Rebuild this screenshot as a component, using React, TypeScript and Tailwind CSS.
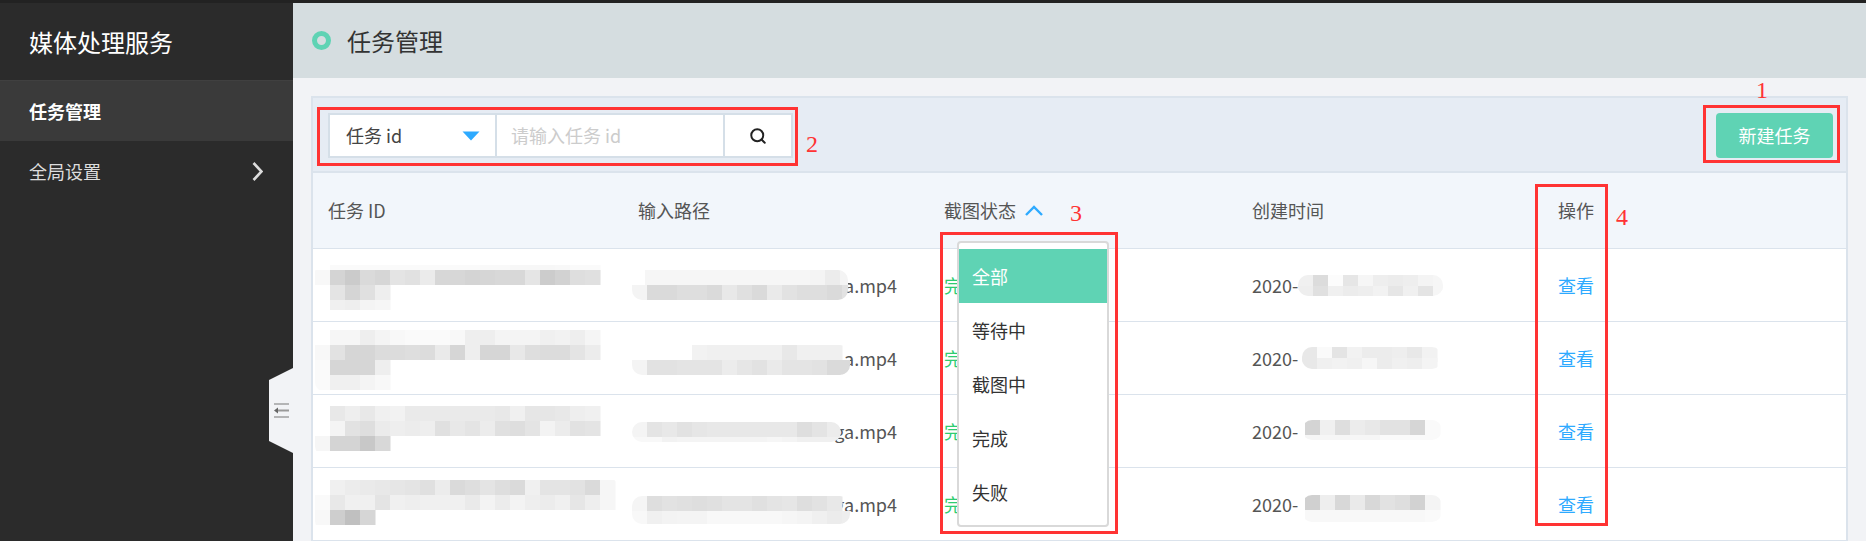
import { Search } from 'lucide-react'

const FONT = 'font-["Microsoft_YaHei","Noto_Sans_CJK_SC","Noto_Sans",sans-serif]'

interface MosaicLine { x?: number; y: number; h?: number; cells: number[] }

// smudged-out cells: each number is the grey level of a 15px square
function Mosaic({ left, top, width, height, lines }: { left: number; top: number; width: number; height: number; lines: MosaicLine[] }) {
  return (
    <svg className="absolute rounded-[10px]" style={{ left, top }} width={width} height={height}>
      {lines.map((l, i) => l.cells.map((c, j) => (
        <rect
          key={`${i}-${j}`}
          x={(l.x ?? 0) + j * 15}
          y={l.y}
          width={15.5}
          height={l.h ?? 15}
          fill={`rgb(${c},${c},${c})`}
        />
      )))}
    </svg>
  )
}

const rows = [
  { path: 'ga.mp4', date: '2020-' },
  { path: 'a.mp4', date: '2020-' },
  { path: 'ga.mp4', date: '2020-' },
  { path: 'gga.mp4', date: '2020-' },
]

const smudges = [
  // task id column
  { left: 315, top: 262, width: 290, height: 52, lines: [
    { x: 0, y: 8, h: 15, cells: [248] },
    { x: 15, y: 3, cells: [250,250,250,250,250,250,250,250,250,250,249,249,247,247,247,248,250,250] },
    { x: 15, y: 8, cells: [212,203,218,214,228,225,235,215,215,212,214,216,216,229,204,210,222,224] },
    { x: 15, y: 23, cells: [228,213,224,238] },
    { x: 15, y: 38, h: 10, cells: [240,238,244,246] },
  ] },
  { left: 315, top: 330, width: 305, height: 62, lines: [
    { x: 15, y: 0, cells: [246,246,238,244,248,250,250,250,248,238,238,244,244,244,240,242,238,245] },
    { x: 0, y: 15, cells: [248,226,214,214,220,220,222,220,234,214,238,214,214,232,222,220,220,228,236] },
    { x: 0, y: 30, cells: [250,214,214,214,238] },
    { x: 0, y: 45, cells: [250,240,240,244,248] },
  ] },
  { left: 315, top: 404, width: 290, height: 52, lines: [
    { x: 15, y: 2, cells: [232,238,232,240,242,234,234,234,234,234,234,232,240,230,230,232,238,240] },
    { x: 15, y: 17, cells: [244,226,222,235,238,236,238,224,232,228,236,224,222,228,243,236,226,228] },
    { x: 0, y: 32, cells: [246,212,212,200,216] },
  ] },
  { left: 315, top: 479, width: 305, height: 52, lines: [
    { x: 15, y: 1, cells: [240,236,234,232,230,228,224,236,218,222,228,222,218,240,228,228,226,218,246] },
    { x: 0, y: 16, cells: [250,232,240,240,228,240,238,240,240,240,234,243,236,243,238,236,240,230,238,246] },
    { x: 0, y: 31, cells: [248,206,192,214] },
  ] },
  // input path column
  { left: 632, top: 270, width: 216, height: 30, lines: [
    { x: 13, y: 0, cells: [246,246,246,246,246,246,246,246,246,246,246,244,236,244] },
    { x: 0, y: 15, cells: [244,218,218,222,222,218,232,224,218,234,226,222,222,218,226] },
  ] },
  { left: 632, top: 345, width: 218, height: 30, lines: [
    { x: 60, y: 0, cells: [242,240,240,240,240,240,232,240,240,240] },
    { x: 0, y: 15, cells: [244,226,226,228,228,228,236,230,226,234,228,228,226,218,218] },
  ] },
  { left: 632, top: 422, width: 209, height: 20, lines: [
    { x: 0, y: 0, cells: [244,228,232,226,230,232,232,232,232,232,232,222,228,236] },
    { x: 0, y: 15, h: 5, cells: [248,248,242,244,244,244,244,244,244,246,244,240,240,240] },
  ] },
  { left: 632, top: 496, width: 218, height: 28, lines: [
    { x: 0, y: 0, cells: [245,222,226,224,222,224,228,228,224,228,230,222,226,232] },
    { x: 0, y: 15, h: 13, cells: [248,240,243,244,244,248,248,248,248,248,246,244,240,236,238] },
  ] },
  // created time column
  { left: 1298, top: 275, width: 145, height: 21, lines: [
    { x: 0, y: 0, cells: [240,220,252,230,246,238,236,238,244,246] },
    { x: 0, y: 11, h: 10, cells: [238,224,240,236,238,242,230,240,228,246] },
  ] },
  { left: 1302, top: 347, width: 140, height: 22, lines: [
    { x: 0, y: 0, cells: [232,250,228,242,236,236,238,232,242] },
    { x: 0, y: 11, h: 11, cells: [232,240,242,240,246,236,240,238,244] },
  ] },
  { left: 1302, top: 420, width: 140, height: 20, lines: [
    { x: 3, y: 0, cells: [212,240,222,236,232,226,226,214,250] },
    { x: 3, y: 15, h: 5, cells: [246,246,246,246,246,250,250,250,250] },
  ] },
  { left: 1302, top: 495, width: 140, height: 27, lines: [
    { x: 3, y: 0, cells: [208,238,216,234,216,226,222,210,244] },
    { x: 3, y: 15, h: 12, cells: [248,248,248,248,248,248,248,248,250] },
  ] },
]

const options = ['全部', '等待中', '截图中', '完成', '失败']

export default function App() {
  return (
    <div className={`relative flex h-[541px] w-full flex-col overflow-hidden bg-[#f2f3f6] text-[18px] text-[#555] ${FONT}`}>
      <div className="h-[3px] bg-[#222]" />
      <div className="flex flex-1">
        <aside className="w-[293px] shrink-0 bg-[#2b2b2b] text-[#ddd]">
          <div className="flex h-[77px] items-center pl-[29px] text-2xl text-white">媒体处理服务</div>
          <div className="flex h-[61px] items-center border-t border-[#404040] bg-[#3a3a3a] pl-[29px] font-bold text-white">任务管理</div>
          <div className="flex h-[61px] items-center justify-between pl-[29px] pr-[30px]">
            <span>全局设置</span>
            <svg width="11" height="19" viewBox="0 0 11 19" fill="none" stroke="#ddd" strokeWidth="2.6">
              <path d="M1.5 1l8 8.5-8 8.5" />
            </svg>
          </div>
        </aside>

        <main className="flex min-w-0 flex-1 flex-col">
          <div className="flex h-[75px] shrink-0 items-center bg-[#d5dde0] pl-[19px]">
            <span className="h-[19px] w-[19px] rounded-full border-[5px] border-[#5fd3b4]" />
            <h1 className="ml-4 text-2xl font-normal text-[#333]">任务管理</h1>
          </div>

          <div className="ml-[18px] mr-[18px] mt-[18px] flex-1 border-x-2 border-t-2 border-[#dbe3ec] bg-white">
            <div className="flex h-[75px] items-start justify-between border-b-2 border-[#dbe3ec] bg-[#e6ecf4] pl-[15px] pr-[13px] pt-[15px]">
              <div className="flex h-[45px] w-[465px] border-2 border-[#d5dfe8] bg-white">
                <div className="flex w-[167px] items-center justify-between border-r-2 border-[#d5dfe8] pl-4 pr-[15px] text-[#444]">
                  <span>任务 id</span>
                  <svg width="18" height="10" viewBox="0 0 18 10" fill="#2eaaff"><path d="M0.5 0.5h17L9 9.5z" /></svg>
                </div>
                <div className="flex w-[228px] items-center border-r-2 border-[#d5dfe8] pl-[14px] text-[#ccc]">请输入任务 id</div>
                <div className="flex flex-1 items-center justify-center text-[#222]">
                  <Search size={18} strokeWidth={2.6} />
                </div>
              </div>
              <button className="h-[45px] w-[117px] rounded bg-[#5fd3b4] text-white">新建任务</button>
            </div>

            <div className="grid h-[76px] grid-cols-[310px_306px_308px_306px_1fr] items-center border-b border-[#dbe3ec] bg-[#f2f6fb] pl-[15px]">
              <div>任务 ID</div>
              <div>输入路径</div>
              <div className="flex items-center gap-2">
                截图状态
                <svg width="20" height="11" viewBox="0 0 20 11" fill="none" stroke="#2eaaff" strokeWidth="2.4">
                  <path d="M2 10l8-8 8 8" />
                </svg>
              </div>
              <div>创建时间</div>
              <div>操作</div>
            </div>

            {rows.map((r, i) => (
              <div key={i} className="grid h-[73px] grid-cols-[310px_306px_308px_306px_1fr] items-center border-b border-[#dbe3ec] pl-[15px]">
                <div />
                <div className="w-[259px] text-right">{r.path}</div>
                <div className="text-[#2ecc71]">完成</div>
                <div>{r.date}</div>
                <a className="text-[#2eaaff]">查看</a>
              </div>
            ))}
          </div>
        </main>
      </div>

      {smudges.map((s, i) => <Mosaic key={i} {...s} />)}

      {/* sidebar collapse tab */}
      <div className="absolute left-[269px] top-[368px] flex h-[85px] w-[24px] items-center justify-center bg-[#f2f3f6] [clip-path:polygon(0_14%,100%_0,100%_100%,0_86%)]">
        <svg width="15" height="15" viewBox="0 0 15 15" fill="none" stroke="#777" strokeWidth="1">
          <path d="M0 1h15M0 14h15" />
          <path d="M3 7.5h12" stroke="#999" strokeWidth="2" />
          <path d="M0 7.5L4 4.5v6z" fill="#666" stroke="none" />
        </svg>
      </div>

      {/* status filter dropdown */}
      <div className="absolute left-[957px] top-[241px] h-[286px] w-[152px] rounded-sm border-2 border-[#d9d9d9] bg-white py-1.5 text-[#333]">
        {options.map((o, i) => (
          <div key={o} className={`flex h-[54px] items-center pl-[13px] ${i === 0 ? 'bg-[#5fd3b4] text-white' : ''}`}>{o}</div>
        ))}
      </div>

      {/* red annotations drawn over the screenshot */}
      <div className="absolute left-[317px] top-[107px] h-[59px] w-[481px] border-[3px] border-[#f33]" />
      <div className="absolute left-[1703px] top-[105px] h-[58px] w-[137px] border-[3px] border-[#f33]" />
      <div className="absolute left-[940px] top-[232px] h-[302px] w-[178px] border-[3px] border-[#f33]" />
      <div className="absolute left-[1535px] top-[184px] h-[342px] w-[73px] border-[3px] border-[#f33]" />
      <span className='absolute left-[1756px] top-[78px] font-["Liberation_Serif",serif] text-[24px] leading-none text-[#f33]'>1</span>
      <span className='absolute left-[806px] top-[132px] font-["Liberation_Serif",serif] text-[24px] leading-none text-[#f33]'>2</span>
      <span className='absolute left-[1070px] top-[201px] font-["Liberation_Serif",serif] text-[24px] leading-none text-[#f33]'>3</span>
      <span className='absolute left-[1616px] top-[205px] font-["Liberation_Serif",serif] text-[24px] leading-none text-[#f33]'>4</span>
    </div>
  )
}
